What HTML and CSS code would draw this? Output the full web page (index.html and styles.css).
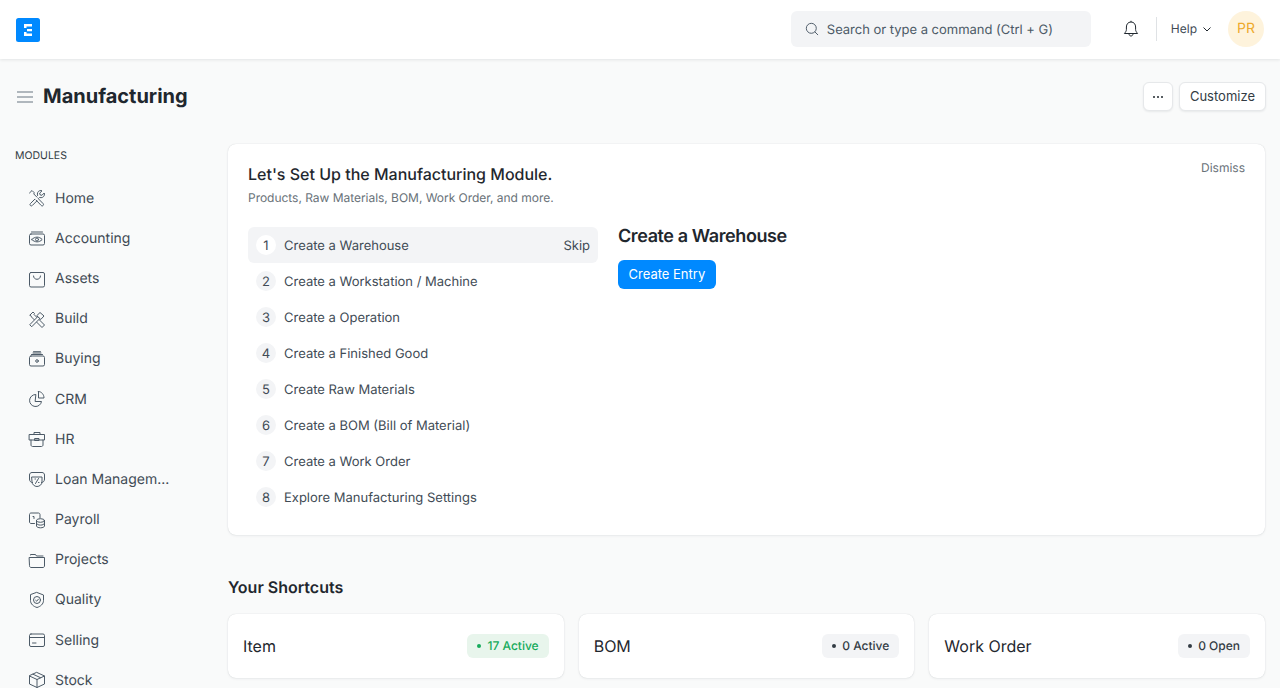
FILE: index.html
```html
<!DOCTYPE html>
<html lang="en">
<head>
  <meta charset="UTF-8">
  <meta name="viewport" content="width=device-width, initial-scale=1.0">
  <title>Manufacturing</title>
  <link rel="stylesheet" href="styles.css">
</head>
<body>
  <!-- navbar -->
  <header class="navbar">
    <svg class="logo" viewBox="0 0 24 24" width="24" height="24">
      <rect width="24" height="24" rx="2.5" fill="#0089ff"/>
      <path d="M8 6h8v2.500h-5.500V10H8zM11 11h5v2.200h-5zM8 14h2.500v1.500H16V18H8z" fill="#fff"/>
    </svg>
    <div class="search">
      <svg viewBox="0 0 16 16" width="14" height="14" fill="none" stroke="#4c5a67" stroke-width="1.1">
        <circle cx="7.2" cy="7.2" r="5.7"/><path d="M11.4 11.4l3.2 3.2" stroke-linecap="round"/>
      </svg>
      <span class="search-text">Search or type a command (Ctrl + G)</span>
    </div>
    <svg class="bell" viewBox="0 0 20 20" width="20" height="20" fill="none" stroke="#1f272e" stroke-width="1" stroke-linejoin="round">
      <path d="M10 3c-3 0-4.600 2.300-4.600 5v2.600c0 1.400-1 2.700-2 3.900h13.200c-1-1.200-2-2.500-2-3.900V8c0-2.700-1.600-5-4.600-5z"/>
      <path d="M8 14.800c0 1.300.9 2.200 2 2.200s2-.9 2-2.200M10 1.800V3"/>
    </svg>
    <div class="nav-sep"></div>
    <div class="help">Help
      <svg viewBox="0 0 10 10" width="10" height="10" fill="none" stroke="#1f272e" stroke-width="1"><path d="M1.500 3.500L5 7l3.500-3.500"/></svg>
    </div>
    <div class="avatar">PR</div>
  </header>

  <div class="page-head">
    <div class="page-title">
      <svg class="menu-icon" viewBox="0 0 16 12" width="16" height="12" fill="none" stroke="#98a1a9" stroke-width="1.300">
        <path d="M0 1h16M0 6h16M0 11h16"/>
      </svg>
      <h1>Manufacturing</h1>
    </div>
    <div class="page-actions">
      <button class="btn btn-dots"><i></i><i></i><i></i></button>
      <button class="btn">Customize</button>
    </div>
  </div>

  <div class="layout">
    <!-- sidebar -->
    <aside class="sidebar">
      <div class="side-label">MODULES</div>
      <ul class="side-list">
        <li><svg viewBox="0 0 18 18"><path d="M1.500 4L4 1.500l2.200 2.200-.4 1.300 3.200 3.200M6.800 10.200l-4.300 4.300c-.7.800-.7 1.500-.1 2s1.300.6 2-.1l4.400-4.400M9.500 6.500c-.6-2.200.3-4.200 2.200-4.800.8-.3 1.600-.2 2.300.1l-2.300 2.300.4 1.800 1.800.4 2.300-2.300c.3.700.4 1.500.1 2.300-.6 1.900-2.600 2.800-4.800 2.200l-1.200 1.200 4.700 4.800c.7.700.7 1.400.1 2s-1.300.6-2-.1L8 11"/></svg>Home</li>
        <li><svg viewBox="0 0 18 18"><rect x="1.500" y="5" width="15" height="11" rx="1.500"/><path d="M3.500 3h11M3.800 10.500c3-3.200 7.400-3.200 10.400 0-3 3.200-7.400 3.200-10.400 0z"/><circle cx="9" cy="10.500" r="1.500"/></svg>Accounting</li>
        <li><svg viewBox="0 0 18 18"><rect x="1.500" y="2.500" width="15" height="14.500" rx="1.500"/><path d="M5.500 6c0 4.500 7 4.500 7 0"/></svg>Assets</li>
        <li><svg viewBox="0 0 18 18"><path d="M2 5l3-3 1.500 1.500-.5 1 10.500 10.500-2.500 2.500L3.500 7l-.5-1z" fill="#f9fafa"/><path d="M2 14.500L10.200 6.200l2 2L4 16.500z" fill="#f9fafa"/><path d="M9 5.500L12 2.500l4 3.500-3 3.200z" fill="#f9fafa"/></svg>Build</li>
        <li><svg viewBox="0 0 18 18"><rect x="1.500" y="6" width="15" height="10" rx="1.500"/><path d="M3.500 4.500h11M5 3h8M5.500 1.700h7"/><circle cx="9" cy="11" r="1.300"/></svg>Buying</li>
        <li><svg viewBox="0 0 18 18"><path d="M7.500 4.500a6 6 0 1 0 6 7h-6z"/><path d="M10.500 1.500v6.500H16c0-3.500-2.500-6.500-5.500-6.500z"/></svg>CRM</li>
        <li><svg viewBox="0 0 18 18"><path d="M3 10v5c0 .8.700 1.500 1.500 1.500h9c.8 0 1.500-.7 1.500-1.500v-5"/><path d="M1.500 4.500h15V10h-15zM6 4.500V2.500h6v2M7 8.500h4v2H7z"/></svg>HR</li>
        <li><svg viewBox="0 0 18 18"><path d="M4.500 12.500C2.500 12.500 1.500 11 1.500 9V5c0-1.500 1-2.500 2.500-2.500h10c1.500 0 2.500 1 2.500 2.500v4c0 2-1 3.500-3 3.500"/><path d="M4 7h10v5c0 2.500-2.500 4.500-5 4.500S4 14.500 4 12z"/><path d="M10.500 8.500l-3 5M7 9h.5M10.500 12.500h.5"/></svg>Loan Managem...</li>
        <li><svg viewBox="0 0 18 18"><path d="M6.500 12.500H3c-.8 0-1.500-.7-1.500-1.500V3.500C1.500 2.700 2.200 2 3 2h7.500c.8 0 1.500.7 1.500 1.500V7M5 5.500h1v2"/><ellipse cx="12.500" cy="9.500" rx="4" ry="1.800"/><path d="M8.500 9.500v5.500c0 1 1.800 1.800 4 1.800s4-.8 4-1.800V9.500M8.500 12.300c0 1 1.800 1.800 4 1.800s4-.8 4-1.800"/></svg>Payroll</li>
        <li><svg viewBox="0 0 18 18"><path d="M1.500 6.500h15V15c0 .8-.7 1.500-1.500 1.500H3c-.8 0-1.500-.7-1.500-1.500z"/><path d="M2.500 4V3.500h5l1 1.500h6.500"/></svg>Projects</li>
        <li><svg viewBox="0 0 18 18"><path d="M9 1.500l6.500 2.500v5.500c0 3.500-3 6-6.500 7-3.500-1-6.500-3.500-6.500-7V4z"/><circle cx="9" cy="9" r="3.500"/><path d="M7.700 9.300l1 .9 1.700-2"/></svg>Quality</li>
        <li><svg viewBox="0 0 18 18"><rect x="1.500" y="3" width="15" height="12.500" rx="1.500"/><path d="M1.500 6.500h15M4.500 12h3.500"/></svg>Selling</li>
        <li><svg viewBox="0 0 18 18"><path d="M9 1.500l7.500 3.500v8L9 16.500 1.500 13V5zM1.500 5L9 8.500 16.500 5M9 8.500v8M5 3.200l7.500 3.500"/></svg>Stock</li>
      </ul>
    </aside>

    <!-- main -->
    <main class="main">
      <section class="card onboarding">
        <div class="onboarding-head">
          <div>
            <h2>Let's Set Up the Manufacturing Module.</h2>
            <p>Products, Raw Materials, BOM, Work Order, and more.</p>
          </div>
          <span class="dismiss">Dismiss</span>
        </div>
        <div class="onboarding-body">
          <ol class="steps">
            <li class="step active"><span class="num">1</span><span class="step-name">Create a Warehouse</span><span class="step-name skip">Skip</span></li>
            <li class="step"><span class="num">2</span><span class="step-name">Create a Workstation / Machine</span></li>
            <li class="step"><span class="num">3</span><span class="step-name">Create a Operation</span></li>
            <li class="step"><span class="num">4</span><span class="step-name">Create a Finished Good</span></li>
            <li class="step"><span class="num">5</span><span class="step-name">Create Raw Materials</span></li>
            <li class="step"><span class="num">6</span><span class="step-name">Create a BOM (Bill of Material)</span></li>
            <li class="step"><span class="num">7</span><span class="step-name">Create a Work Order</span></li>
            <li class="step"><span class="num">8</span><span class="step-name">Explore Manufacturing Settings</span></li>
          </ol>
          <div class="step-detail">
            <h3>Create a Warehouse</h3>
            <button class="btn-primary">Create Entry</button>
          </div>
        </div>
      </section>

      <h4 class="section-title">Your Shortcuts</h4>
      <div class="shortcuts">
        <div class="card shortcut"><span>Item</span><span class="pill green"><i></i>17 Active</span></div>
        <div class="card shortcut"><span>BOM</span><span class="pill"><i></i>0 Active</span></div>
        <div class="card shortcut"><span>Work Order</span><span class="pill"><i></i>0 Open</span></div>
      </div>
    </main>
  </div>
</body>
</html>
```

FILE: styles.css
```css
* {
  margin: 0;
  padding: 0;
  box-sizing: border-box;
}
html, body {
  height: 688px;
  overflow: hidden;
}
body {
  font-family: Inter, "Liberation Sans", sans-serif;
  background: #f9fafa;
  color: #1f272e;
  font-size: 13px;
  text-rendering: geometricPrecision;
}
/* navbar */
.navbar {
  display: flex;
  align-items: center;
  height: 59px;
  padding: 0 16px;
  background: #fff;
  box-shadow: 0 1px 3px rgba(25, 39, 52, 0.1);
  position: relative;
}
.logo {
  flex: none;
}
.search {
  display: flex;
  align-items: center;
  gap: 8px;
  width: 300px;
  height: 36px;
  margin-left: auto;
  margin-top: -1px;
  padding: 0 14px;
  background: #f3f4f6;
  border-radius: 6px;
  color: #4c5a67;
  font-size: 13px;
}
.search-text {
  padding-top: 2px;
  letter-spacing: -0.02px;
}
.bell {
  margin-left: 30px;
  margin-top: -1px;
}
.nav-sep {
  width: 1px;
  height: 24px;
  margin-left: 15px;
  margin-top: -1px;
  background: #dfe2e5;
}
.help {
  display: flex;
  align-items: center;
  gap: 5px;
  margin-left: 14px;
  margin-top: -3px;
  font-size: 12px;
  color: #414b55;
}
.help svg {
  margin-top: 2px;
}
.avatar {
  width: 36px;
  height: 36px;
  margin-left: 16px;
  margin-top: -1px;
  border-radius: 50%;
  background: #fef3dc;
  color: #eeaa2c;
  font-size: 14px;
  line-height: 36px;
  text-align: center;
}
/* page head */
.page-head {
  display: flex;
  align-items: center;
  justify-content: space-between;
  height: 74px;
  padding: 0 14px 0 17px;
}
.page-title {
  display: flex;
  align-items: center;
  gap: 10px;
}
.menu-icon {
  margin-top: 2px;
}
.page-title h1 {
  font-size: 20px;
  font-weight: 700;
}
.page-actions {
  display: flex;
  gap: 6px;
  margin-top: 1px;
}
.btn {
  height: 29px;
  padding: 0 10px 1px;
  font: inherit;
  color: #333c44;
  background: #fff;
  border: 1px solid #e6e8ea;
  border-radius: 6px;
  box-shadow: 0 1px 2px rgba(25, 39, 52, 0.08);
}
.btn-dots {
  display: flex;
  align-items: center;
  justify-content: center;
  gap: 2px;
  width: 30px;
  padding: 0;
}
.btn-dots i {
  width: 2px;
  height: 2px;
  border-radius: 50%;
  background: #1f272e;
}
/* layout */
.layout {
  display: flex;
  padding: 11px 15px 0;
}
.sidebar {
  flex: none;
  width: 213px;
}
.side-label {
  height: 21px;
  margin-top: 1px;
  font-size: 10.500px;
  line-height: 21px;
  color: #333c44;
}
.side-list {
  list-style: none;
  padding: 12.250px 0 0 13px;
}
.side-list li {
  display: flex;
  align-items: center;
  gap: 9px;
  height: 40.170px;
  font-size: 14px;
  color: #414b55;
}
.side-list svg {
  flex: none;
  width: 18px;
  height: 18px;
  fill: none;
  stroke: #4c5a67;
  stroke-width: 1;
  stroke-linejoin: round;
  stroke-linecap: round;
}
.main {
  flex: 1;
}
.card {
  background: #fff;
  border-radius: 8px;
  box-shadow: 0 0 1px rgba(25, 39, 52, 0.2), 0 1px 3px rgba(25, 39, 52, 0.06);
}
/* onboarding */
.onboarding {
  height: 391px;
  padding: 19px 20px 20px;
}
.onboarding-head {
  display: flex;
  justify-content: space-between;
  align-items: flex-start;
}
.onboarding-head h2 {
  font-size: 16px;
  font-weight: 500;
  line-height: 22px;
}
.onboarding-head p {
  margin-top: 5px;
  font-size: 12px;
  line-height: 16px;
  color: #687178;
  letter-spacing: -0.03px;
}
.dismiss {
  margin-top: -3px;
  font-size: 12px;
  color: #687178;
}
.onboarding-body {
  display: flex;
  gap: 20px;
  margin-top: 21px;
}
.steps {
  list-style: none;
  width: 350px;
}
.step {
  display: flex;
  align-items: center;
  height: 36px;
  padding: 0 8px;
  border-radius: 6px;
  color: #414b55;
}
.step.active {
  background: #f3f4f6;
}
.step-name {
  padding-top: 2px;
}
.num {
  width: 20px;
  height: 20px;
  margin-right: 8px;
  border-radius: 50%;
  background: #f3f4f6;
  font-size: 13px;
  line-height: 22px;
  text-align: center;
}
.active .num {
  background: #fff;
}
.skip {
  margin-left: auto;
}
.step-detail h3 {
  padding-top: 1px;
  font-size: 18px;
  font-weight: 600;
  line-height: 18px;
  letter-spacing: -0.4px;
}
.btn-primary {
  display: block;
  height: 29px;
  margin-top: 14px;
  padding: 0 10.500px 1px;
  font: inherit;
  color: #fff;
  background: #0089ff;
  border: none;
  border-radius: 6px;
}
/* shortcuts */
.section-title {
  margin-top: 42px;
  font-size: 16px;
  font-weight: 600;
  line-height: 20px;
}
.shortcuts {
  display: grid;
  grid-template-columns: repeat(3, 1fr);
  gap: 15px;
  margin-top: 17px;
}
.shortcut {
  display: flex;
  align-items: center;
  justify-content: space-between;
  height: 64px;
  padding: 0 15px;
  font-size: 16px;
}
.pill {
  display: flex;
  align-items: center;
  gap: 6px;
  height: 24px;
  padding: 0 10px 1px;
  border-radius: 6px;
  background: #f3f4f6;
  color: #333c44;
  font-size: 12px;
  font-weight: 500;
}
.pill i {
  width: 4px;
  height: 4px;
  border-radius: 50%;
  background: currentColor;
}
.pill.green {
  background: #e8f5ec;
  color: #16ab5c;
}
```
